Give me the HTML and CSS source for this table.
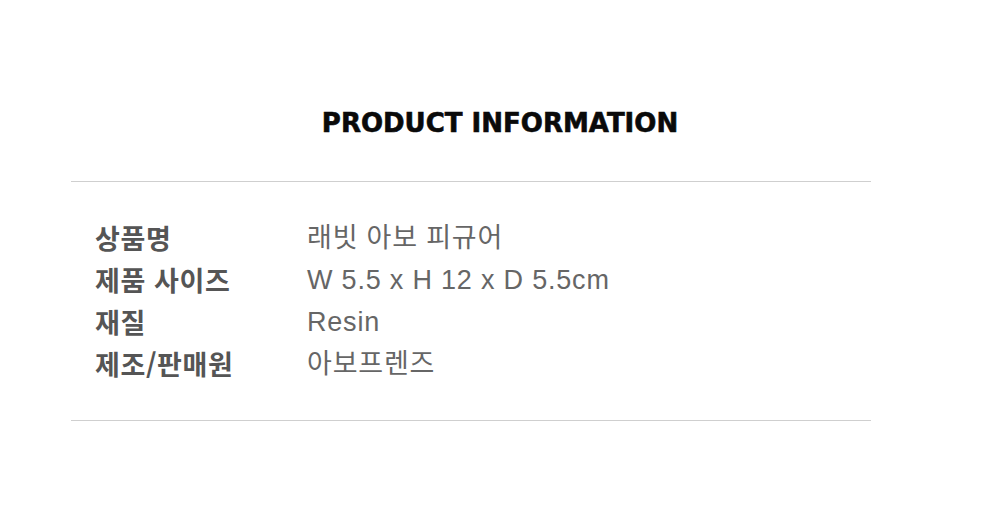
FILE: index.html
```html
<!DOCTYPE html>
<html lang="ko">
<head>
<meta charset="utf-8">
<link rel="stylesheet" href="styles.css">
</head>
<body>
<main class="page">
  <h1 class="title">PRODUCT INFORMATION</h1>
  <section class="info">
    <dl class="rows">
      <div class="row"><dt>상품명</dt><dd>래빗 아보 피규어</dd></div>
      <div class="row"><dt>제품 사이즈</dt><dd>W 5.5 x H 12 x D 5.5cm</dd></div>
      <div class="row"><dt>재질</dt><dd>Resin</dd></div>
      <div class="row"><dt>제조/판매원</dt><dd>아보프렌즈</dd></div>
    </dl>
  </section>
</main>
</body>
</html>
```

FILE: styles.css
```css
html, body {
  margin: 0;
  padding: 0;
  background: #fff;
}
.page {
  width: 1000px;
  height: 519px;
  padding-top: 106px;
  box-sizing: border-box;
}
.title {
  margin: 0;
  text-align: center;
  font-family: "DejaVu Sans", sans-serif;
  font-weight: 700;
  font-size: 26px;
  line-height: 34px;
  letter-spacing: 0;
  color: #0a0a0a;
  -webkit-text-stroke: 0.6px #0a0a0a;
}
.info {
  margin: 41px 0 0 71px;
  width: 800px;
  border-top: 1px solid #cfcfcf;
  border-bottom: 1px solid #cfcfcf;
  padding: 35px 0;
}
.rows {
  margin: 0;
  padding: 0 0 0 24px;
}
.row {
  display: flex;
  line-height: 42px;
}
.row dt {
  width: 212px;
  flex: none;
  font-family: "Noto Sans CJK KR", sans-serif;
  font-weight: 700;
  font-size: 27px;
  letter-spacing: 0.6px;
  color: #555;
}
.row dd {
  margin: 0;
  font-family: "Liberation Sans", "Noto Sans CJK KR", sans-serif;
  font-size: 27px;
  letter-spacing: 0.8px;
  color: #666;
}
```
